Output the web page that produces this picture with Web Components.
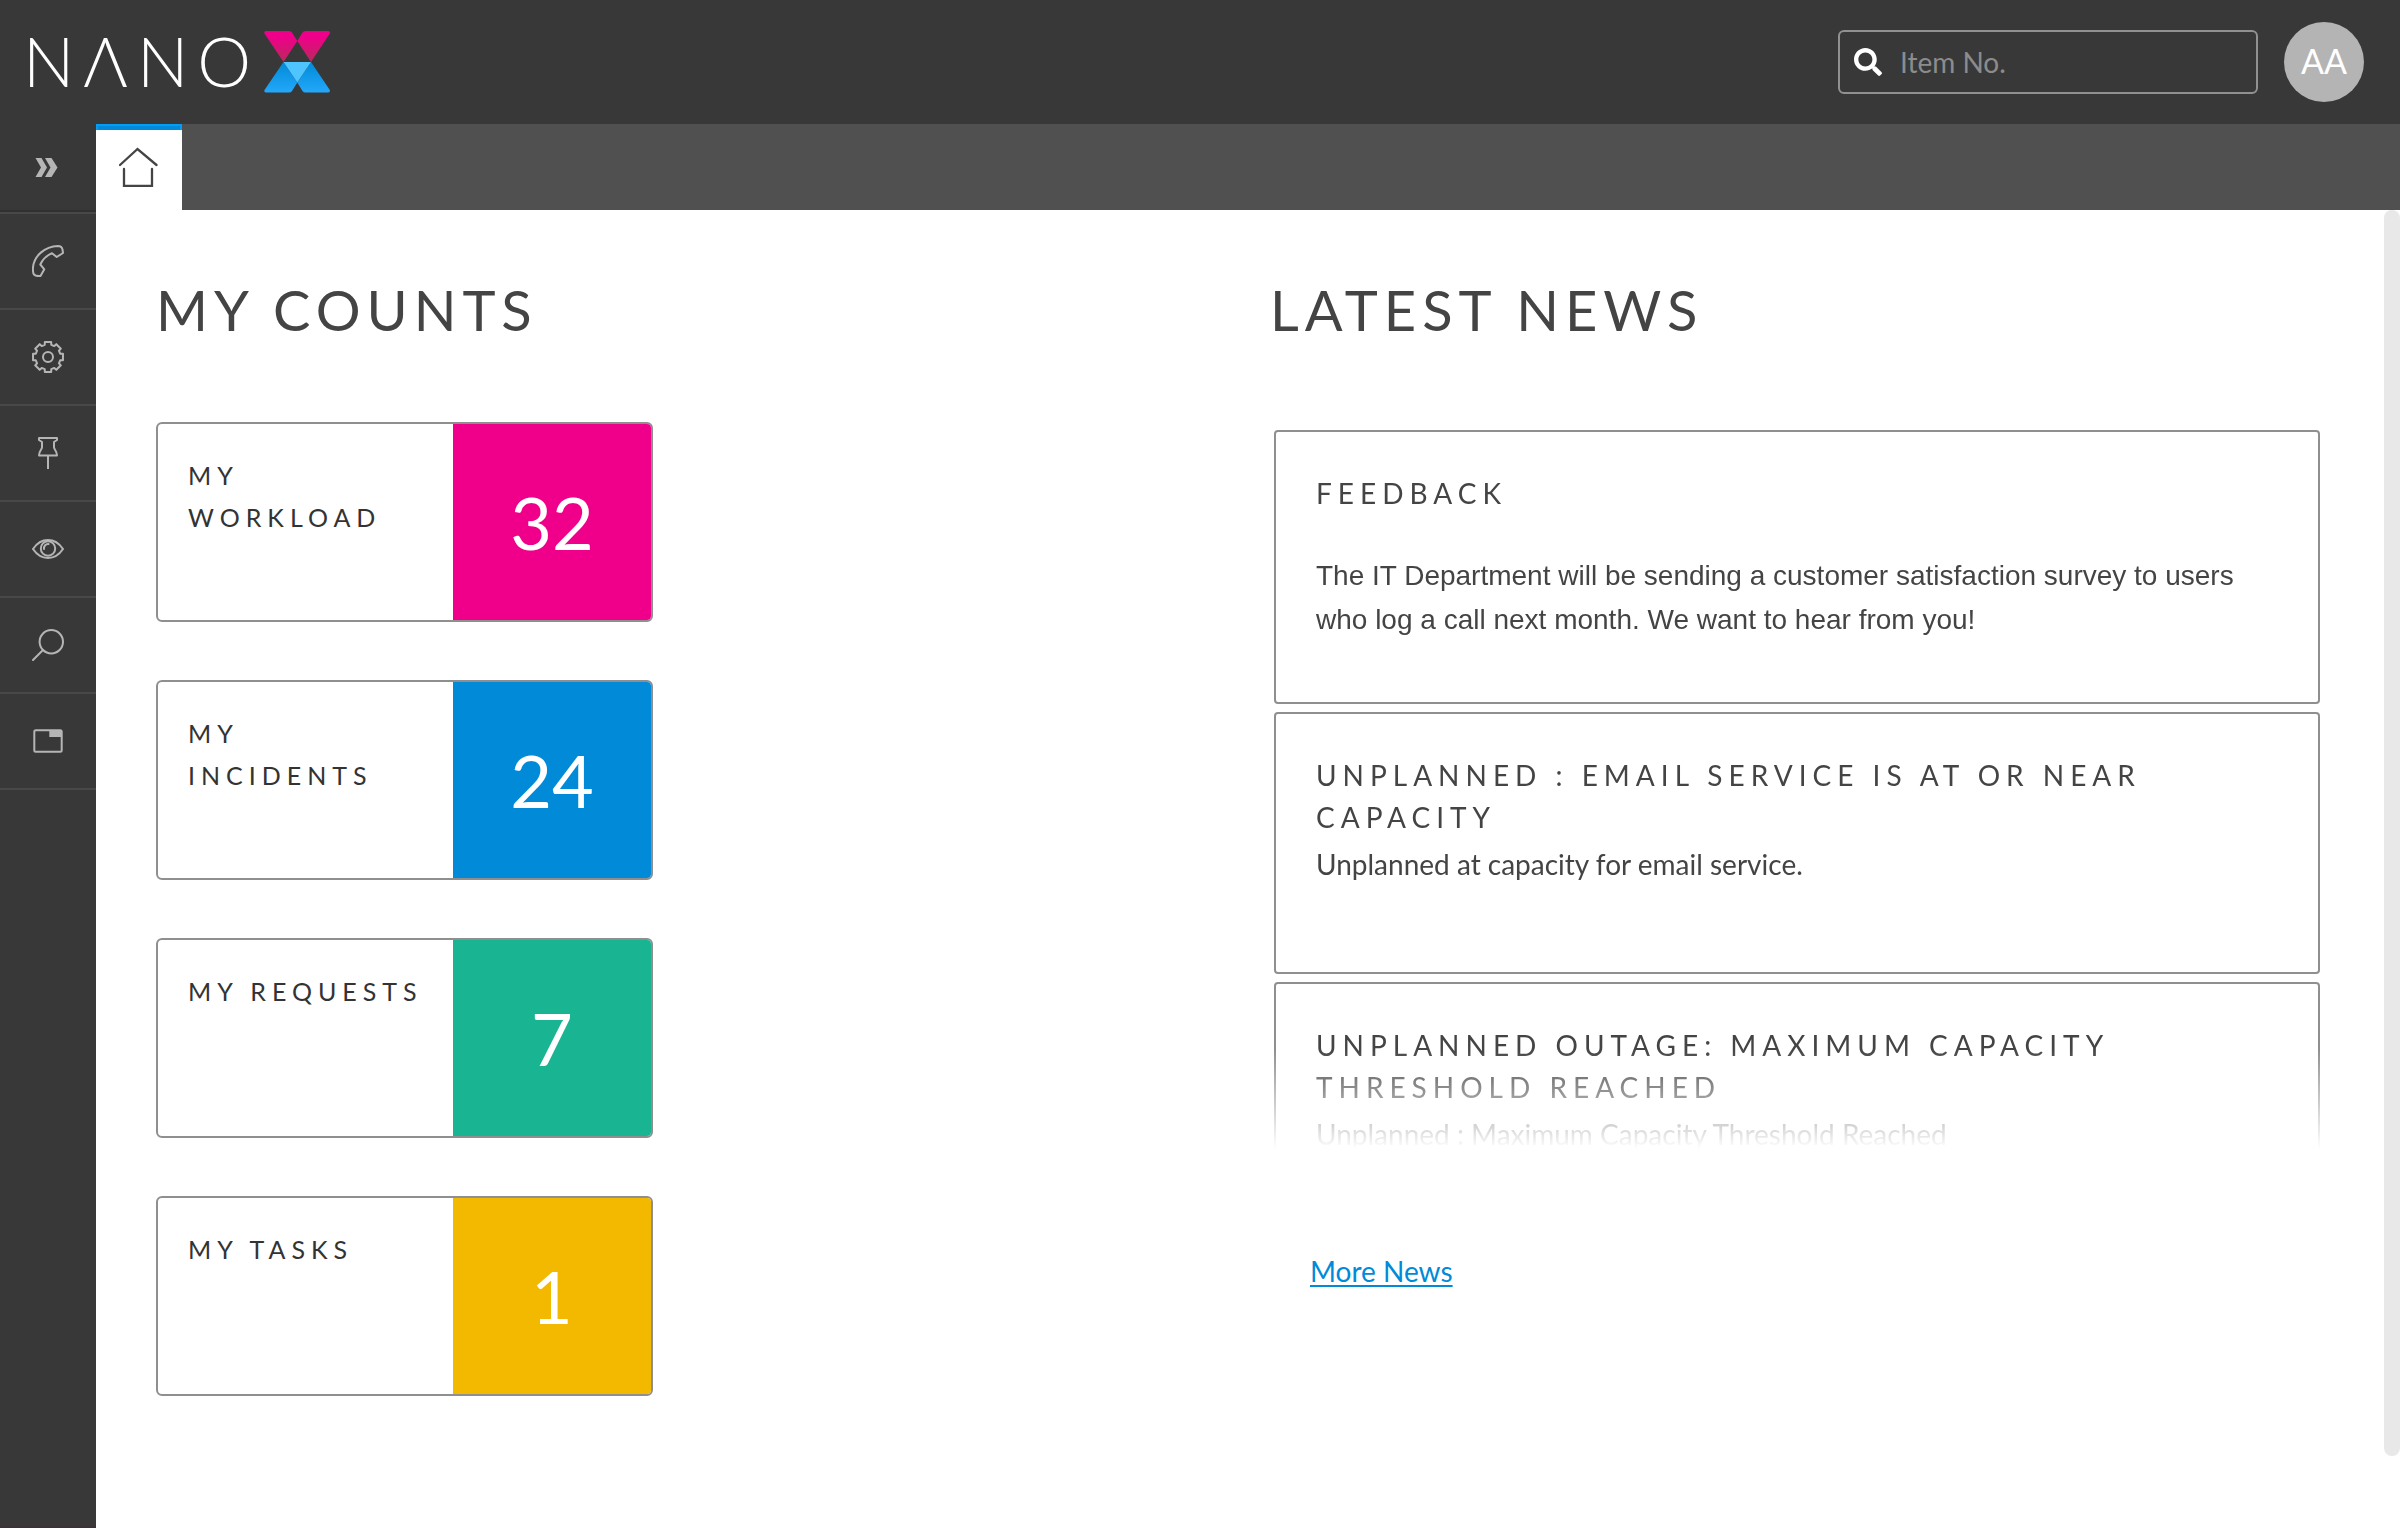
<!DOCTYPE html>
<html lang="en">
<head>
<meta charset="utf-8">
<title>Nano X</title>
<style>
  html, body { margin: 0; height: 100%; }
  body {
    font-family: Lato, "Liberation Sans", sans-serif;
    font-size: 28px;
    color: #444;
    background: #fff;
  }
</style>
</head>
<body>

<nano-app>
  <nano-header slot="header" initials="AA"></nano-header>
  <nano-sidebar slot="sidebar"></nano-sidebar>
  <nano-tabs slot="tabs"></nano-tabs>

  <nano-section heading="My Counts">
    <count-card label="My Workload" color="#f0008a">32</count-card>
    <count-card label="My Incidents" color="#008ad8">24</count-card>
    <count-card label="My Requests" color="#19b592">7</count-card>
    <count-card label="My Tasks" color="#f2b900">1</count-card>
  </nano-section>

  <nano-section heading="Latest News">
    <news-feed>
      <news-card heading="Feedback" rich>The IT Department will be sending a customer satisfaction survey to users who log a call next month. We want to hear from you!</news-card>
      <news-card heading="Unplanned : Email service is at or near capacity">Unplanned at capacity for email service.</news-card>
      <news-card heading="Unplanned Outage: Maximum Capacity Threshold Reached">Unplanned : Maximum Capacity Threshold Reached</news-card>
    </news-feed>
  </nano-section>
</nano-app>

<script>
class NanoElement extends HTMLElement {
  constructor() {
    super();
    this.attachShadow({ mode: 'open' });
  }
  connectedCallback() {
    this.shadowRoot.innerHTML = `<style>*{box-sizing:border-box}</style>` + this.render();
  }
}

/* Eight-toothed outline for the settings icon, in a 32px box */
function gearPath() {
  const pt = (r, deg) => {
    const a = deg * Math.PI / 180;
    return (16 + r * Math.cos(a)).toFixed(2) + ' ' + (16 + r * Math.sin(a)).toFixed(2);
  };
  const points = [];
  for (let k = 0; k < 8; k++) {
    const a = k * 45;
    points.push(pt(12.6, a - 15), pt(15.3, a - 12), pt(15.3, a + 12), pt(12.6, a + 15));
  }
  return 'M' + points.join('L') + 'Z';
}

const SIDEBAR_ITEMS = [
  ['Expand menu', '<path class="solid" d="M3.500 6H9.500L15 15.500L9.500 25H3.500L9 15.500ZM13 6H19.500L25.500 15.500L19.500 25H13L18.500 15.500Z"/>'],
  ['Calls', '<path d="M26 1C29 1 30 2 30.500 4.500L31 8L24.700 12L20 8.200C15 10.500 10.500 14.500 8.300 19.500L12.300 24.300L8.500 31C5 31.300 3 30.500 2 29.500C.8 28 .8 25.500 1 22.500C2 11 12.500 1.500 26 1Z"/>'],
  ['Settings', `<path d="${gearPath()}"/><circle cx="16" cy="16" r="5"/>`],
  ['Pinned', '<path d="M7 1H25V3L22 5V10.500C22 12 25 14 25 18.500H7C7 14 10 12 10 10.500V5L7 3ZM16 19V32"/>'],
  ['Watched', '<path d="M1 16C5 10 10 7 16 7S27 10 31 16C27 22 22 25 16 25S5 22 1 16Z"/><circle cx="16" cy="15.500" r="7.200"/><path d="M12 16A4 4.500 0 0 1 16.500 11"/>'],
  ['Search', '<circle cx="19.300" cy="12.700" r="11.700"/><path d="M11 21L1 31"/>'],
  ['Windows', '<rect x="2.300" y="5.300" width="27.400" height="21.400" rx="1.500"/><path class="solid" d="M17.300 5H30V12H17.300Z"/>']
];

customElements.define('nano-app', class extends NanoElement {
  render() {
    return `<style>
      :host { display: flex; flex-direction: column; height: 100vh; min-height: 100%; }
      .body { display: flex; flex: 1; min-height: 0; }
      .page { display: flex; flex-direction: column; flex: 1; min-width: 0; }
      .scroller { display: flex; flex: 1; min-height: 0; }
      main { display: grid; grid-template-columns: 1fr 1fr; align-items: start; flex: 1; min-width: 0; }
      .rail { display: flex; width: 16px; padding-bottom: 72px; }
      .thumb { flex: 1; border-radius: 8px; background: #e8e8e8; }
    </style>
    <slot name="header"></slot>
    <div class="body">
      <slot name="sidebar"></slot>
      <div class="page">
        <slot name="tabs"></slot>
        <div class="scroller">
          <main><slot></slot></main>
          <div class="rail"><div class="thumb"></div></div>
        </div>
      </div>
    </div>`;
  }
});

customElements.define('nano-header', class extends NanoElement {
  render() {
    return `<style>
      :host { display: block; }
      header { display: flex; align-items: center; height: 124px; padding: 0 36px 0 23px; background: #383838; }
      .brand { display: flex; align-items: center; gap: 3px; color: #fff; text-decoration: none; }
      .word { padding-bottom: 2px; font-size: 68px; font-weight: 300; line-height: 80px; letter-spacing: 9px; }
      .mark { display: block; width: 68px; height: 64px; }
      .search {
        display: flex; align-items: center; gap: 18px; width: 420px; height: 64px;
        margin-left: auto; padding: 0 14px; border: 2px solid #919191; border-radius: 6px;
      }
      .search svg { display: block; width: 28px; height: 28px; fill: #fff; }
      input {
        flex: 1; min-width: 0; padding: 0; border: 0; outline: 0; background: none;
        color: #fff; font: inherit; line-height: 44px;
      }
      input::placeholder { color: #8c8c8c; opacity: 1; }
      .avatar {
        width: 80px; height: 80px; margin-left: 26px; padding: 0 0 2px; border: 0; border-radius: 50%;
        background: #b4b4b4; color: #fff; font: inherit; font-size: 34px; line-height: 76px;
      }
    </style>
    <header>
      <a class="brand" href="#" aria-label="Nano X">
        <span class="word">NΛNO</span>
        <svg class="mark" viewBox="0 0 68 64" aria-hidden="true">
          <defs>
            <linearGradient id="pink" x1="0" y1="0" x2="0" y2="1">
              <stop offset=".2" stop-color="#f0008a"/><stop offset="1" stop-color="#b82a5c"/>
            </linearGradient>
            <linearGradient id="blue" x1="0" y1="0" x2="0" y2="1">
              <stop offset="0" stop-color="#008ad8"/><stop offset="1" stop-color="#24a8fa"/>
            </linearGradient>
          </defs>
          <g fill="url(#pink)">
            <path d="M3 1H26Q28 1 29 2.500L34.300 11L20.500 32L1.500 3.500Q.8 1.300 3 1Z"/>
            <path d="M65 1H42.500Q40.500 1 39.500 2.500L34.300 11L48 32L66.800 3.500Q67.500 1.300 65 1Z"/>
          </g>
          <g fill="url(#blue)">
            <path d="M3 62.500H26Q28 62.500 29 61L34.300 52.500L20.500 32L1.500 60Q.8 62.200 3 62.500Z"/>
            <path d="M65 62.500H42.500Q40.500 62.500 39.500 61L34.300 52.500L48 32L66.800 60Q67.500 62.200 65 62.500Z"/>
          </g>
          <path fill="#4fc5ff" d="M20.500 32H48L34.300 52.500Z"/>
        </svg>
      </a>
      <label class="search">
        <svg viewBox="0 0 512 512" aria-hidden="true"><path d="M505 442.700L405.300 343c-4.500-4.500-10.600-7-17-7H372c27.600-35.300 44-79.700 44-128C416 93.100 322.900 0 208 0S0 93.100 0 208s93.100 208 208 208c48.300 0 92.700-16.400 128-44v16.300c0 6.400 2.500 12.500 7 17l99.700 99.700c9.400 9.400 24.600 9.400 33.900 0l28.300-28.300c9.400-9.400 9.400-24.600.1-34zM208 336c-70.700 0-128-57.200-128-128 0-70.700 57.200-128 128-128 70.700 0 128 57.200 128 128 0 70.700-57.200 128-128 128z"/></svg>
        <input type="text" placeholder="Item No." aria-label="Item No.">
      </label>
      <button class="avatar" type="button">${this.getAttribute('initials')}</button>
    </header>`;
  }
});

customElements.define('nano-sidebar', class extends NanoElement {
  render() {
    return `<style>
      :host { display: block; width: 96px; flex: none; background: #383838; border-bottom: 2px solid #3a3237; }
      nav { display: flex; flex-direction: column; }
      button {
        display: flex; align-items: center; justify-content: center; height: 96px; padding: 0;
        border: 0; border-bottom: 2px solid #484848; background: none;
      }
      button:first-child { height: 90px; box-shadow: inset 0 -2px #303030; }
      svg {
        display: block; width: 32px; height: 32px; fill: none; stroke: #b5b5b5;
        stroke-width: 2; stroke-linejoin: round; stroke-linecap: round;
      }
      .solid { fill: #b5b5b5; stroke: none; }
    </style>
    <nav>${SIDEBAR_ITEMS.map(([name, art]) =>
      `<button type="button" aria-label="${name}"><svg viewBox="0 0 32 32" aria-hidden="true">${art}</svg></button>`).join('')}
    </nav>`;
  }
});

customElements.define('nano-tabs', class extends NanoElement {
  render() {
    return `<style>
      :host { display: flex; height: 86px; flex: none; background: #505050; }
      button {
        display: flex; flex-direction: column; align-items: center; gap: 17px;
        width: 86px; padding: 0; border: 0; background: #fff;
      }
      button::before {
        content: ""; align-self: stretch; box-sizing: border-box; height: 6px;
        border: 2px solid #049df6; border-bottom: 0; background: #008ad8;
      }
      svg { display: block; width: 40px; height: 40px; fill: none; stroke: #444; stroke-width: 2.300; stroke-linecap: round; }
    </style>
    <button type="button" aria-label="Home">
      <svg viewBox="0 0 40 40" aria-hidden="true"><path d="M1 18L18.500 2L37.500 18M5 22V39H33V22"/></svg>
    </button>`;
  }
});

customElements.define('nano-section', class extends NanoElement {
  render() {
    return `<style>
      :host { display: block; padding: 66px 60px 0; }
      :host(:last-of-type) { padding: 66px 60px 0 30px; }
      h1 {
        margin: 0 0 78px; font-size: 56px; font-weight: 400; line-height: 68px;
        letter-spacing: 6px; text-transform: uppercase;
      }
      .stack { display: flex; flex-direction: column; gap: 58px; }
    </style>
    <h1>${this.getAttribute('heading')}</h1>
    <div class="stack"><slot></slot></div>`;
  }
});

customElements.define('count-card', class extends NanoElement {
  render() {
    return `<style>
      :host { display: block; }
      article {
        display: flex; width: 497px; height: 200px; overflow: hidden;
        border: 2px solid #8f8f8f; border-radius: 6px; color: #333;
      }
      h2 {
        flex: 1; margin: 0; padding: 30px 26px 0 30px; font-size: 25px; font-weight: 400;
        line-height: 42px; letter-spacing: 6px; text-transform: uppercase;
      }
      .count {
        display: flex; align-items: center; justify-content: center; width: 198px;
        background: ${this.getAttribute('color')}; color: #fff; font-size: 72px; line-height: 84px;
      }
    </style>
    <article>
      <h2>${this.getAttribute('label')}</h2>
      <div class="count"><slot></slot></div>
    </article>`;
  }
});

customElements.define('news-feed', class extends NanoElement {
  render() {
    return `<style>
      :host { display: block; padding: 8px 4px 0; }
      .list {
        display: flex; flex-direction: column; gap: 8px; height: 719px; overflow: hidden;
        -webkit-mask-image: linear-gradient(#000 calc(100% - 100px), transparent);
        mask-image: linear-gradient(#000 calc(100% - 100px), transparent);
      }
      .more { display: block; padding: 100px 36px 0; line-height: 44px; }
      a { color: #008ad8; text-decoration-thickness: 2px; text-underline-offset: 3px; }
    </style>
    <div class="list"><slot></slot></div>
    <div class="more"><a href="#">More News</a></div>`;
  }
});

customElements.define('news-card', class extends NanoElement {
  render() {
    return `<style>
      :host { display: block; flex: none; }
      article { padding: 40px 60px 60px 40px; border: 2px solid #8f8f8f; border-radius: 4px; }
      h2 {
        margin: 0 0 4px; font-size: 28px; font-weight: 400; line-height: 42px;
        letter-spacing: 6px; text-transform: uppercase;
      }
      p { margin: 0; padding-bottom: 26px; line-height: 44px; }
      :host([rich]) p { padding: 36px 0 0; font-family: "Liberation Sans", Arial, sans-serif; }
    </style>
    <article>
      <h2>${this.getAttribute('heading')}</h2>
      <p><slot></slot></p>
    </article>`;
  }
});
</script>
</body>
</html>
